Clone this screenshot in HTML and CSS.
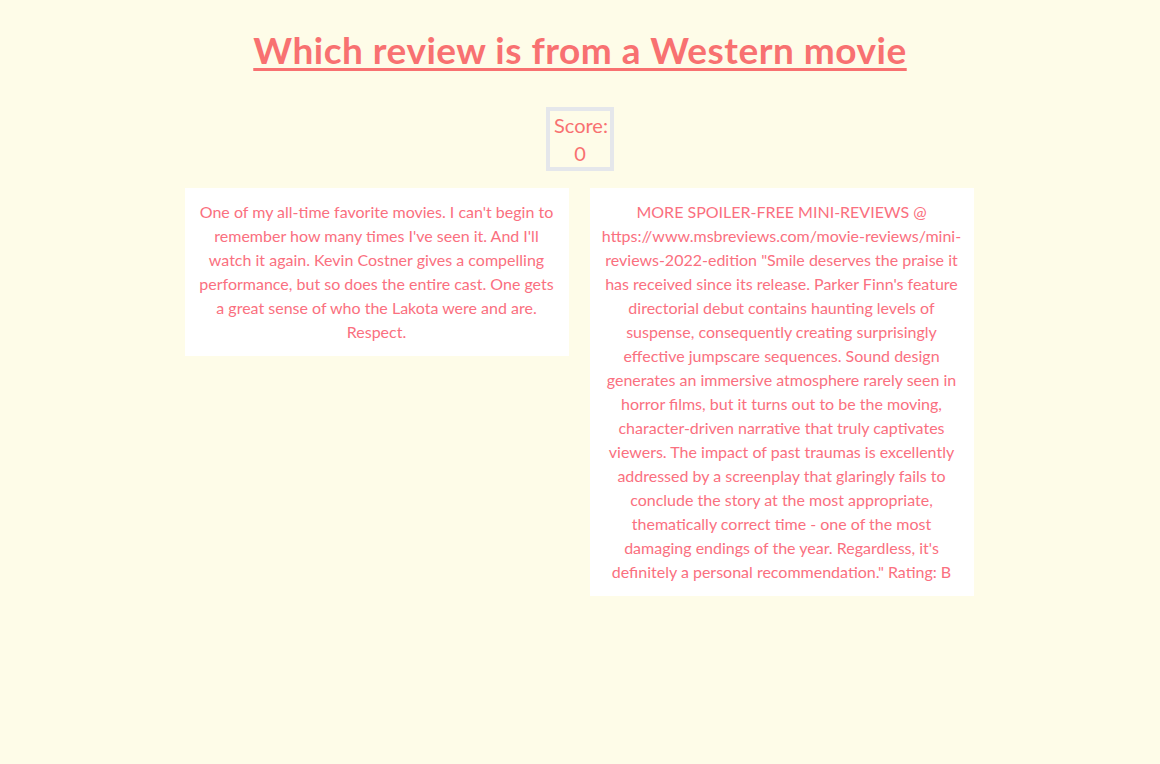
FILE: index.html
```html
<!DOCTYPE html>
<html lang="en">
<head>
<meta charset="utf-8">
<title>Which review is from a Western movie</title>
<link rel="stylesheet" href="styles.css">
</head>
<body>
<main class="page">
  <h1 class="title">Which review is from a Western movie</h1>
  <div class="score">Score: 0</div>
  <div class="cards">
    <div class="card">One of my all-time favorite movies. I can't begin to remember how many times I've seen it. And I'll watch it again. Kevin Costner gives a compelling performance, but so does the entire cast. One gets a great sense of who the Lakota were and are. Respect.</div>
    <div class="card">MORE SPOILER-FREE MINI-REVIEWS @ https://www.msbreviews.com/movie-reviews/mini-reviews-2022-edition "Smile deserves the praise it has received since its release. Parker Finn's feature directorial debut contains haunting levels of suspense, consequently creating surprisingly effective jumpscare sequences. Sound design generates an immersive atmosphere rarely seen in horror films, but it turns out to be the moving, character-driven narrative that truly captivates viewers. The impact of past traumas is excellently addressed by a screenplay that glaringly fails to conclude the story at the most appropriate, thematically correct time - one of the most damaging endings of the year. Regardless, it's definitely a personal recommendation." Rating: B</div>
  </div>
</main>
</body>
</html>
```
FILE: styles.css
```css
html, body {
  margin: 0;
  padding: 0;
  background: #fefce8;
  min-height: 100%;
}
body {
  font-family: Lato, "Noto Sans", sans-serif;
  color: #f87171;
  min-height: 764px;
}
.page {
  display: flex;
  flex-direction: column;
  align-items: center;
  padding-top: 30px;
}
.title {
  margin: 0 0 37px;
  font-size: 37px;
  line-height: 40px;
  font-weight: 700;
  letter-spacing: 0.5px;
  text-decoration: underline;
  text-decoration-thickness: 3px;
  text-underline-offset: 4px;
}
.score {
  box-sizing: border-box;
  width: 68px;
  padding: 0 4px;
  border: 4px solid #e5e7eb;
  font-size: 20px;
  line-height: 28px;
  text-align: center;
  margin-bottom: 17px;
}
.cards {
  display: flex;
  align-items: flex-start;
  gap: 21px;
  margin-right: 2px;
}
.card {
  box-sizing: border-box;
  width: 384px;
  padding: 12px;
  background: #ffffff;
  font-size: 16px;
  line-height: 24px;
  text-align: center;
  color: #fa7080;
}
```
